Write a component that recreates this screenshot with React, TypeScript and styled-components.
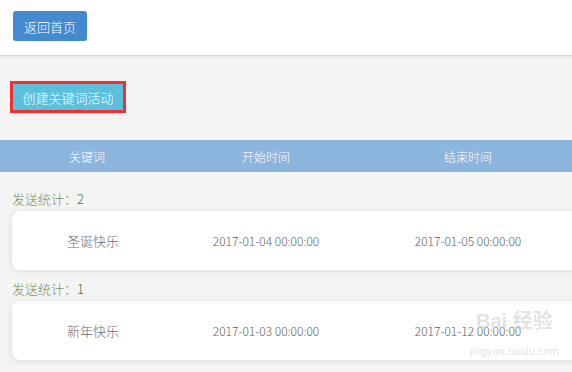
import React from "react";
import styled, { createGlobalStyle } from "styled-components";

const groups = [
  {
    count: 2,
    keyword: "圣诞快乐",
    start: "2017-01-04 00:00:00",
    end: "2017-01-05 00:00:00",
  },
  {
    count: 1,
    keyword: "新年快乐",
    start: "2017-01-03 00:00:00",
    end: "2017-01-12 00:00:00",
  },
];

const App = () => {
  return (
    <Page>
      <GlobalStyle />
      <TopBar>
        <BackButton>返回首页</BackButton>
      </TopBar>
      <Main>
        <CreateButton>创建关键词活动</CreateButton>
        <TableHead>
          <HeadCell>关键词</HeadCell>
          <HeadCell>开始时间</HeadCell>
          <HeadCell>结束时间</HeadCell>
        </TableHead>
        <Groups>
          {groups.map((g) => (
            <Group key={g.keyword}>
              <CountLabel>
                发送统计：<CountNum>{g.count}</CountNum>
              </CountLabel>
              <RowCard>
                <Cell $light>{g.keyword}</Cell>
                <Cell>{g.start}</Cell>
                <Cell>{g.end}</Cell>
              </RowCard>
            </Group>
          ))}
        </Groups>
      </Main>
      <Watermark>
        <MarkTop>Bai 经验</MarkTop>
        <MarkUrl>jingyan.baidu.com</MarkUrl>
      </Watermark>
    </Page>
  );
};

export default App;

const GlobalStyle = createGlobalStyle`
  html, body {
    margin: 0;
    padding: 0;
    background: #f4f4f4;
    overflow: hidden;
  }
  body {
    font-family: "Noto Sans CJK SC", "Noto Sans", "Liberation Sans", sans-serif;
  }
`;

const Page = styled.div`
  position: relative;
  width: 572px;
  height: 372px;
  overflow: hidden;
  background: #f4f4f4;
`;

const TopBar = styled.div`
  height: 56px;
  background: #fff;
  box-sizing: border-box;
  padding: 11px 13px;
  border-bottom: 1px solid #d8d8d8;
  box-shadow: 0 1px 3px rgba(0, 0, 0, 0.08);
`;

const BackButton = styled.button`
  width: 74px;
  height: 30px;
  padding: 0;
  border: none;
  border-radius: 3px;
  background: #4589cf;
  color: #fff;
  font-family: inherit;
  font-size: 13px;
  font-weight: 300;
  cursor: pointer;
`;

const Main = styled.div`
  padding-top: 25px;
`;

const CreateButton = styled.button`
  display: block;
  margin-left: 10px;
  width: 116px;
  height: 32px;
  padding: 0;
  border: 3px solid #f0302f;
  background: #5bc0de;
  color: #fff;
  font-family: inherit;
  font-size: 13px;
  font-weight: 300;
  cursor: pointer;
`;

const TableHead = styled.div`
  margin-top: 27px;
  height: 32px;
  display: grid;
  grid-template-columns: 174px 184px 220px;
  align-items: center;
  background: #8bb5dd;
`;

const HeadCell = styled.div`
  text-align: center;
  color: #fff;
  font-size: 12px;
  font-weight: 300;
`;

const Groups = styled.div`
  display: flex;
  flex-direction: column;
  gap: 10px;
  padding-top: 18px;
`;

const Group = styled.div`
  display: flex;
  flex-direction: column;
  gap: 3px;
`;

const CountLabel = styled.div`
  padding-left: 12px;
  height: 18px;
  line-height: 18px;
  font-size: 13px;
  font-weight: 300;
  color: #719062;
`;

const CountNum = styled.span`
  color: #3c7a3c;
`;

const RowCard = styled.div`
  margin-left: 12px;
  width: 580px;
  height: 59px;
  display: grid;
  grid-template-columns: 162px 184px 220px;
  align-items: center;
  background: #fff;
  border-radius: 8px;
  box-shadow: 0 1px 6px rgba(0, 0, 0, 0.1);
`;

const Cell = styled.div<{ $light?: boolean }>`
  text-align: center;
  font-size: ${(p) => (p.$light ? "13px" : "12px")};
  font-weight: 300;
  color: ${(p) => (p.$light ? "#6a6a6a" : "#606060")};
`;

const Watermark = styled.div`
  position: absolute;
  left: 470px;
  top: 310px;
  display: flex;
  flex-direction: column;
  align-items: center;
  color: rgba(200, 200, 200, 0.5);
  pointer-events: none;
`;

const MarkTop = styled.div`
  font-family: "Liberation Sans", "Noto Sans CJK SC", sans-serif;
  font-size: 20px;
  font-weight: bold;
  line-height: 22px;
`;

const MarkUrl = styled.div`
  font-family: "Liberation Sans", sans-serif;
  font-size: 11px;
  line-height: 14px;
  margin-top: 12px;
`;
